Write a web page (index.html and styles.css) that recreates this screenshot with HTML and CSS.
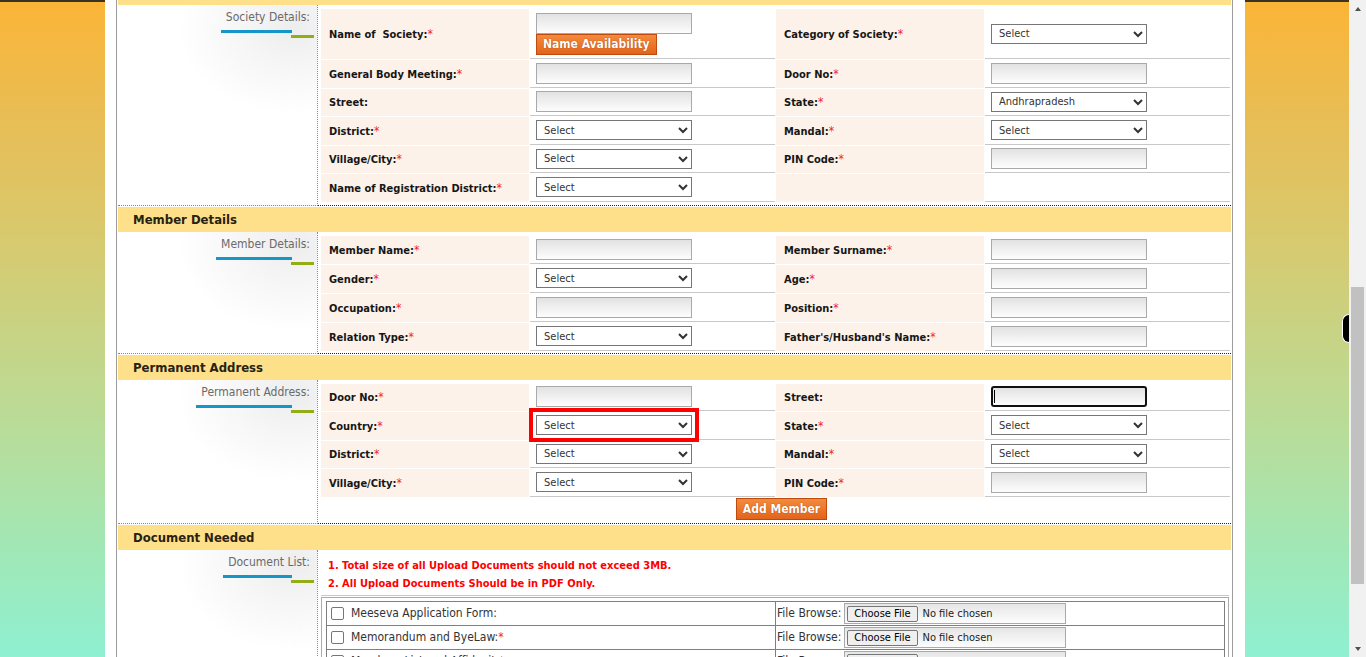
FILE: index.html
```html
<!DOCTYPE html>
<html lang="en">
<head>
<meta charset="utf-8">
<title>Society Registration</title>
<link rel="stylesheet" href="styles.css">
</head>
<body>
<div class="screen">
  <main class="page">
    <div class="panel">
      <h2 class="sec-head">Society Details</h2>
      <section class="sec-body">
        <div class="side">
          <span class="side-title">Society Details:</span>
          <span class="side-mark"></span>
        </div>
        <div class="form-area form-area-first">
          <table class="ftable ftable-tight">
            <colgroup><col class="c-lbl"><col><col class="c-lbl"><col></colgroup>
            <tr class="row-tall">
              <td class="lbl">Name of&nbsp; Society:<span class="req">*</span></td>
              <td class="fld"><input class="txt" type="text"><button class="btn" type="button">Name Availability</button></td>
              <td class="lbl">Category of Society:<span class="req">*</span></td>
              <td class="fld"><select class="sel"><option>Select</option></select></td>
            </tr>
            <tr>
              <td class="lbl">General Body Meeting:<span class="req">*</span></td>
              <td class="fld"><input class="txt" type="text"></td>
              <td class="lbl">Door No:<span class="req">*</span></td>
              <td class="fld"><input class="txt" type="text"></td>
            </tr>
            <tr>
              <td class="lbl">Street:</td>
              <td class="fld"><input class="txt" type="text"></td>
              <td class="lbl">State:<span class="req">*</span></td>
              <td class="fld"><select class="sel"><option>Andhrapradesh</option></select></td>
            </tr>
            <tr>
              <td class="lbl">District:<span class="req">*</span></td>
              <td class="fld"><select class="sel"><option>Select</option></select></td>
              <td class="lbl">Mandal:<span class="req">*</span></td>
              <td class="fld"><select class="sel"><option>Select</option></select></td>
            </tr>
            <tr>
              <td class="lbl">Village/City:<span class="req">*</span></td>
              <td class="fld"><select class="sel"><option>Select</option></select></td>
              <td class="lbl">PIN Code:<span class="req">*</span></td>
              <td class="fld"><input class="txt" type="text"></td>
            </tr>
            <tr>
              <td class="lbl">Name of Registration District:<span class="req">*</span></td>
              <td class="fld"><select class="sel"><option>Select</option></select></td>
              <td class="lbl"></td>
              <td class="fld"></td>
            </tr>
          </table>
        </div>
      </section>

      <h2 class="sec-head">Member Details</h2>
      <section class="sec-body">
        <div class="side">
          <span class="side-title">Member Details:</span>
          <span class="side-mark"></span>
        </div>
        <div class="form-area">
          <table class="ftable">
            <colgroup><col class="c-lbl"><col><col class="c-lbl"><col></colgroup>
            <tr>
              <td class="lbl">Member Name:<span class="req">*</span></td>
              <td class="fld"><input class="txt" type="text"></td>
              <td class="lbl">Member Surname:<span class="req">*</span></td>
              <td class="fld"><input class="txt" type="text"></td>
            </tr>
            <tr>
              <td class="lbl">Gender:<span class="req">*</span></td>
              <td class="fld"><select class="sel"><option>Select</option></select></td>
              <td class="lbl">Age:<span class="req">*</span></td>
              <td class="fld"><input class="txt" type="text"></td>
            </tr>
            <tr>
              <td class="lbl">Occupation:<span class="req">*</span></td>
              <td class="fld"><input class="txt" type="text"></td>
              <td class="lbl">Position:<span class="req">*</span></td>
              <td class="fld"><input class="txt" type="text"></td>
            </tr>
            <tr>
              <td class="lbl">Relation Type:<span class="req">*</span></td>
              <td class="fld"><select class="sel"><option>Select</option></select></td>
              <td class="lbl">Father's/Husband's Name:<span class="req">*</span></td>
              <td class="fld"><input class="txt" type="text"></td>
            </tr>
          </table>
        </div>
      </section>

      <h2 class="sec-head">Permanent Address</h2>
      <section class="sec-body">
        <div class="side">
          <span class="side-title">Permanent Address:</span>
          <span class="side-mark"></span>
        </div>
        <div class="form-area">
          <table class="ftable ftable-tight">
            <colgroup><col class="c-lbl"><col><col class="c-lbl"><col></colgroup>
            <tr>
              <td class="lbl">Door No:<span class="req">*</span></td>
              <td class="fld"><input class="txt" type="text"></td>
              <td class="lbl">Street:</td>
              <td class="fld"><span class="caret-field"><input class="txt is-focused" type="text"></span></td>
            </tr>
            <tr>
              <td class="lbl">Country:<span class="req">*</span></td>
              <td class="fld"><select class="sel is-marked"><option>Select</option></select></td>
              <td class="lbl">State:<span class="req">*</span></td>
              <td class="fld"><select class="sel"><option>Select</option></select></td>
            </tr>
            <tr>
              <td class="lbl">District:<span class="req">*</span></td>
              <td class="fld"><select class="sel"><option>Select</option></select></td>
              <td class="lbl">Mandal:<span class="req">*</span></td>
              <td class="fld"><select class="sel"><option>Select</option></select></td>
            </tr>
            <tr>
              <td class="lbl">Village/City:<span class="req">*</span></td>
              <td class="fld"><select class="sel"><option>Select</option></select></td>
              <td class="lbl">PIN Code:<span class="req">*</span></td>
              <td class="fld"><input class="txt" type="text"></td>
            </tr>
            <tr class="row-btn">
              <td class="btn-cell" colspan="4"><button class="btn btn-add" type="button">Add Member</button></td>
            </tr>
          </table>
        </div>
      </section>

      <h2 class="sec-head">Document Needed</h2>
      <section class="sec-body">
        <div class="side">
          <span class="side-title">Document List:</span>
          <span class="side-mark"></span>
        </div>
        <div class="form-area doc-area">
          <ol class="notes">
            <li>1. Total size of all Upload Documents should not exceed 3MB.</li>
            <li>2. All Upload Documents Should be in PDF Only.</li>
          </ol>
          <div class="doc-box">
            <table class="doc-table">
              <colgroup><col class="c-doc"><col></colgroup>
              <tr>
                <td><label class="doc-name"><input class="cb" type="checkbox">Meeseva Application Form:</label></td>
                <td><div class="file-row">File Browse:<span class="filebox"><button class="choose" type="button">Choose File</button><span class="nofile">No file chosen</span></span></div></td>
              </tr>
              <tr>
                <td><label class="doc-name"><input class="cb" type="checkbox">Memorandum and ByeLaw:<span class="req">*</span></label></td>
                <td><div class="file-row">File Browse:<span class="filebox"><button class="choose" type="button">Choose File</button><span class="nofile">No file chosen</span></span></div></td>
              </tr>
              <tr>
                <td><label class="doc-name"><input class="cb" type="checkbox">Members List and Affidavit:<span class="req">*</span></label></td>
                <td><div class="file-row">File Browse:<span class="filebox"><button class="choose" type="button">Choose File</button><span class="nofile">No file chosen</span></span></div></td>
              </tr>
            </table>
          </div>
        </div>
      </section>
    </div>
  </main>

  <div class="scrollbar" aria-hidden="true">
    <span class="sb-btn sb-up"></span>
    <div class="sb-track">
      <span class="sb-before"></span>
      <span class="sb-thumb"></span>
      <span class="sb-after"></span>
    </div>
    <span class="sb-btn sb-down"></span>
  </div>
</div>
<span class="side-widget" aria-hidden="true"></span>
</body>
</html>
```

FILE: styles.css
```css
* { box-sizing: border-box; }

html, body {
  margin: 0;
  padding: 0;
  height: 657px;
  overflow: hidden;
}

body {
  font-family: "DejaVu Sans Condensed", "DejaVu Sans", sans-serif;
  color: #1a1a1a;
  background: linear-gradient(to bottom,
    #3b3423 0, #3b3423 2px,
    #fbb537 2px, #e8bd55 18%, #d8c96e 36%, #c6d486 52%,
    #b3dfa0 70%, #9fe8b8 85%, #8ff0d2 100%);
}

.screen {
  display: grid;
  grid-template-columns: 105px 1140px 1fr 17px;
  height: 657px;
}

.page {
  grid-column: 2;
  background: #fff;
  overflow: hidden;
  height: 657px;
}

.panel {
  margin: -20px 12px 0 11px;
  border-left: 1px solid #9c9c9c;
  border-right: 1px solid #9c9c9c;
  padding: 0 1px;
}

.sec-head {
  margin: 1px 0 0;
  height: 25px;
  line-height: 26px;
  padding-left: 15px;
  background: #ffe08a;
  font-size: 13px;
  font-weight: bold;
  color: #272212;
}

.sec-head:first-child { margin-top: 0; }

.sec-body {
  display: grid;
  grid-template-columns: 200px 1fr;
}

.side {
  padding: 5px 3px 0 0;
  border-right: 1px dotted #8a8a8a;
  border-bottom: 1px dotted #8a8a8a;
  background: radial-gradient(ellipse 115px 85px at 88% 12%, #ededed 0%, #f5f5f5 40%, rgba(255,255,255,0) 100%);
}

.side-title {
  display: block;
  width: max-content;
  margin-left: auto;
  padding: 0 4px 8px 5px;
  font-size: 12px;
  line-height: 15px;
  color: #6a6a6a;
  background: linear-gradient(#1496c8, #1496c8) left bottom / calc(100% - 22px) 3px no-repeat;
}

.side-mark {
  display: block;
  width: 23px;
  height: 3px;
  margin: 2px 0 0 auto;
  background: #93ad16;
}

.form-area {
  padding: 3px 0 1px 2px;
  border-bottom: 1px dotted #222;
}

.form-area-first { padding-bottom: 2px; }

.ftable {
  width: 100%;
  table-layout: fixed;
  border-spacing: 1px;
}

.c-lbl { width: 208px; }

.ftable td {
  height: 28px;
  padding: 0;
  vertical-align: middle;
}

.ftable-tight td { height: 27.5px; }

.ftable .row-tall td { height: 50px; }

.ftable td.lbl {
  background: #fdf2e9;
  padding-left: 8px;
  font-size: 11px;
  font-weight: bold;
  color: #161616;
  white-space: nowrap;
}

.ftable td.fld {
  border-bottom: 1px solid #c8c8c8;
  padding-left: 6px;
}

.req {
  color: #f0213a;
  font-weight: normal;
  font-size: 12px;
}

.txt {
  display: block;
  width: 156px;
  height: 21px;
  margin: 0;
  padding: 0 4px;
  border: 1px solid #a9a9a9;
  border-radius: 0;
  background: linear-gradient(#e2e2e2, #fdfdfd);
  font-family: inherit;
  font-size: 11px;
}

.txt.is-focused {
  border: 2px solid #111;
  border-radius: 3px;
  outline: none;
}

.caret-field {
  display: block;
  width: 156px;
  position: relative;
}

.caret-field::after {
  content: "";
  position: absolute;
  left: 3px;
  top: 4px;
  width: 1px;
  height: 13px;
  background: #000;
}

.sel {
  display: block;
  width: 156px;
  height: 20px;
  margin: 0;
  padding: 0 0 0 3px;
  border: 1px solid #767676;
  border-radius: 0;
  background-color: #fff;
  font-family: inherit;
  font-size: 11px;
  color: #333;
}

.sel.is-marked {
  outline: 4px solid #ff0000;
  outline-offset: 3px;
}

.btn {
  display: block;
  height: 21px;
  margin: 0;
  padding: 0 6px;
  border: 1px solid #bd4a0e;
  border-radius: 0;
  background: linear-gradient(#f58a3c, #e2641b);
  color: #fff;
  font-family: inherit;
  font-size: 12px;
  font-weight: bold;
  text-shadow: 0 0 1px #8a3500;
}

.ftable .row-btn td {
  height: 22px;
  padding: 0 0 1px 12px;
  text-align: center;
}

.btn-add {
  display: inline-block;
  height: 22px;
}

.doc-area {
  padding: 3px 2px 0 3px;
  border-bottom: 0;
}

.notes {
  margin: 0;
  padding: 4px 0 2px 7px;
  list-style: none;
  border-bottom: 1px solid #c8c8c8;
  font-size: 11px;
  font-weight: bold;
  line-height: 18px;
  color: #f00;
}

.doc-box {
  margin-top: 1px;
  padding: 3px 3px 3px 4px;
  border: 1px solid #ababab;
}

.doc-table {
  width: 100%;
  table-layout: fixed;
  border-collapse: collapse;
  border: 1px solid #7f7f7f;
}

.c-doc { width: 449px; }

.doc-table td {
  height: 24px;
  padding: 0;
  border: 1px solid #7f7f7f;
  font-size: 12px;
  color: #333;
  vertical-align: middle;
}

.doc-name {
  display: flex;
  align-items: center;
  padding-left: 4px;
}

.cb {
  -webkit-appearance: none;
  appearance: none;
  width: 13px;
  height: 13px;
  margin: 0 7px 0 0;
  border: 1px solid #767676;
  border-radius: 2px;
  background: #fff;
}

.file-row {
  display: flex;
  align-items: center;
  padding-left: 1px;
}

.filebox {
  flex: none;
  display: flex;
  align-items: center;
  width: 222px;
  height: 21px;
  margin: 1px 0 0 3px;
  padding: 0 2px;
  border: 1px solid #a9a9a9;
  background: linear-gradient(#e6e6e6, #fdfdfd);
}

.choose {
  height: 16px;
  margin: 0;
  padding: 0 6px;
  border: 1px solid #767676;
  border-radius: 2px;
  background: #efefef;
  font-family: inherit;
  font-size: 11px;
  color: #000;
}

.nofile {
  margin-left: 5px;
  font-size: 11px;
  color: #222;
}

.scrollbar {
  grid-column: 4;
  display: flex;
  flex-direction: column;
  background: #f1f1f1;
}

.sb-btn {
  height: 17px;
  display: flex;
  align-items: center;
  justify-content: center;
}

.sb-btn::before {
  content: "";
  border-left: 3.5px solid transparent;
  border-right: 3.5px solid transparent;
}

.sb-up::before { border-bottom: 4px solid #505050; }
.sb-down::before { border-top: 4px solid #505050; }

.sb-track {
  flex: 1;
  display: flex;
  flex-direction: column;
  padding: 0 2px;
}

.sb-before { flex: 270; }
.sb-thumb { flex: 297; background: #c1c1c1; }
.sb-after { flex: 56; }

.side-widget {
  position: fixed;
  top: 314px;
  right: 17px;
  width: 7px;
  height: 29px;
  background: #000;
  border: 1px solid #fff;
  border-right: 0;
  border-radius: 7px 0 0 7px;
}
```
